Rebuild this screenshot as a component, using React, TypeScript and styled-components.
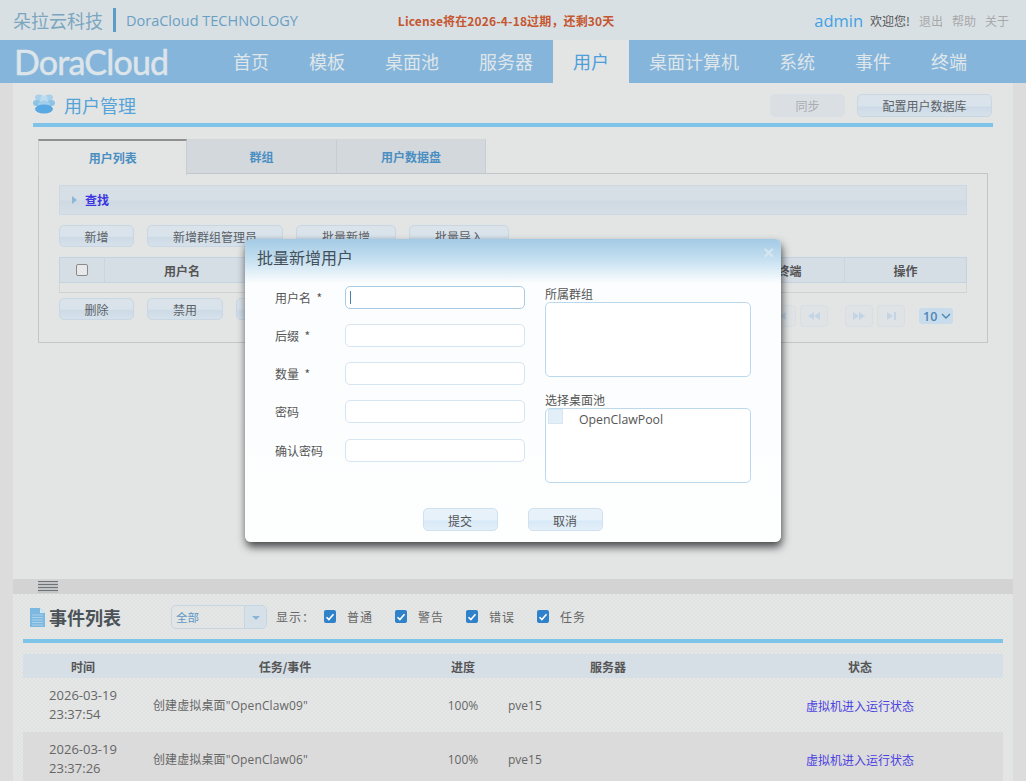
import styled, { createGlobalStyle } from 'styled-components'

const GlobalStyle = createGlobalStyle`
  html, body {
    margin: 0;
    padding: 0;
    background: #dcdcdc;
  }
  body {
    font-family: "Noto Sans CJK SC", "Noto Sans", sans-serif;
    font-size: 12px;
    color: #555;
  }
  * {
    box-sizing: border-box;
  }
`

const navItems = ['首页', '模板', '桌面池', '服务器', '用户', '桌面计算机', '系统', '事件', '终端']
const eventRows = [
  { date: '2026-03-19', time: '23:37:54', name: 'OpenClaw09' },
  { date: '2026-03-19', time: '23:37:26', name: 'OpenClaw06' },
]

const UsersIcon = () => (
  <svg width="22" height="20" viewBox="0 0 22 20">
    <ellipse cx="6" cy="3.500" rx="4" ry="3" fill="#a9d0ea" />
    <ellipse cx="16" cy="3.500" rx="4" ry="3" fill="#a9d0ea" />
    <ellipse cx="11" cy="4.500" rx="3.500" ry="3" fill="#bcdcf0" />
    <ellipse cx="4" cy="9" rx="4" ry="3" fill="#8cc2e6" />
    <ellipse cx="18" cy="9" rx="4" ry="3" fill="#8cc2e6" />
    <ellipse cx="11" cy="9.500" rx="6" ry="3" fill="#a3cfec" />
    <ellipse cx="11" cy="15" rx="9" ry="4.500" fill="#5aa8e2" />
  </svg>
)

const FileIcon = () => (
  <svg width="15" height="20" viewBox="0 0 15 20">
    <path d="M0 1h10l5 5v14H0z" fill="#7db8e0" />
    <path d="M10 1l5 5h-5z" fill="#d4e8f5" />
    <path d="M2 8h11M2 10.500h11M2 13h11M2 15.500h11M2 18h11" stroke="#a9d0ea" strokeWidth="1" />
  </svg>
)

const PagerIcon = ({ first, dir }: { first?: boolean; dir: 'left' | 'right' }) => (
  <svg width="14" height="8" viewBox="0 0 14 8" fill="#c3d5e4">
    {dir === 'left' ? (
      first ? (
        <path d="M2 0h2v8H2zM11 0v8L5 4z" />
      ) : (
        <path d="M7 0v8L1 4zM13 0v8L7 4z" />
      )
    ) : first ? (
      <path d="M1 0v8l6-4zM7 0v8l6-4z" />
    ) : (
      <path d="M3 0v8l6-4zM10 0h2v8h-2z" />
    )}
  </svg>
)

export default function App() {
  return (
    <Page>
      <GlobalStyle />
      <TopBar>
        <Company>朵拉云科技</Company>
        <Divider />
        <CompanyEn>DoraCloud TECHNOLOGY</CompanyEn>
        <License>License将在2026-4-18过期，还剩30天</License>
        <UserBox>
          <AdminName>admin</AdminName>
          <Welcome>欢迎您!</Welcome>
          <TopLink>退出</TopLink>
          <TopLink>帮助</TopLink>
          <TopLink>关于</TopLink>
        </UserBox>
      </TopBar>

      <NavBar>
        <Logo>DoraCloud</Logo>
        <NavList>
          {navItems.map((item) => (
            <NavItem key={item} $active={item === '用户'}>
              {item}
            </NavItem>
          ))}
        </NavList>
      </NavBar>

      <Shell>
        <UserSection>
          <SectionHeader>
            <UsersIcon />
            <SectionTitle>用户管理</SectionTitle>
            <HeaderActions>
              <Button $width={75} $height={23} $disabled>同步</Button>
              <Button $width={135} $height={23}>配置用户数据库</Button>
            </HeaderActions>
          </SectionHeader>

          <Tabs>
            <Tab $active>用户列表</Tab>
            <Tab>群组</Tab>
            <Tab>用户数据盘</Tab>
          </Tabs>

          <TabPanel>
            <SearchBar>
              <SearchArrow />
              查找
            </SearchBar>
            <ButtonRow>
              <Button $width={75}>新增</Button>
              <Button $width={136}>新增群组管理员</Button>
              <Button $width={100}>批量新增</Button>
              <Button $width={100}>批量导入</Button>
            </ButtonRow>
            <UserTable>
              <UserHead>
                <UserHeadCell $width={45}>
                  <PlainCheck />
                </UserHeadCell>
                <UserHeadCell $width={155}>用户名</UserHeadCell>
                <UserHeadCell $grow />
                <UserHeadCell $width={110}>终端</UserHeadCell>
                <UserHeadCell $width={121}>操作</UserHeadCell>
              </UserHead>
              <UserEmptyRow />
            </UserTable>
            <TableFooter>
              <Button $width={75}>删除</Button>
              <Button $width={76}>禁用</Button>
              <Button $width={76} />
              <Pager>
                <PagerGroup>
                  <PagerButton><PagerIcon dir="left" first /></PagerButton>
                  <PagerButton><PagerIcon dir="left" /></PagerButton>
                </PagerGroup>
                <PagerGroup>
                  <PagerButton><PagerIcon dir="right" first /></PagerButton>
                  <PagerButton><PagerIcon dir="right" /></PagerButton>
                </PagerGroup>
                <PageSize>
                  10
                  <svg width="10" height="6" viewBox="0 0 10 6" fill="none" stroke="#4f86b5" strokeWidth="1.400">
                    <path d="M1 1l4 4 4-4" />
                  </svg>
                </PageSize>
              </Pager>
            </TableFooter>
          </TabPanel>
        </UserSection>

        <Splitter>
          <SplitterGrip />
        </Splitter>

        <EventSection>
          <EventHeader>
            <EventTitleBox>
              <FileIcon />
              <EventTitle>事件列表</EventTitle>
            </EventTitleBox>
            <FilterSelect>
              <FilterValue>全部</FilterValue>
              <FilterArrow />
            </FilterSelect>
            <ShowLabel>显示：</ShowLabel>
            {['普通', '警告', '错误', '任务'].map((label) => (
              <CheckItem key={label}>
                <BlueCheck>
                  <svg width="10" height="10" viewBox="0 0 10 10" fill="none" stroke="#fff" strokeWidth="1.600">
                    <path d="M1.500 5.200l2.400 2.400 4.600-5.400" />
                  </svg>
                </BlueCheck>
                <CheckLabel>{label}</CheckLabel>
              </CheckItem>
            ))}
          </EventHeader>
          <EventTable>
            <thead>
              <tr>
                <EventTh $width={120}>时间</EventTh>
                <EventTh $width={284}>任务/事件</EventTh>
                <EventTh $width={72}>进度</EventTh>
                <EventTh $width={218}>服务器</EventTh>
                <EventTh $width={286}>状态</EventTh>
              </tr>
            </thead>
            <tbody>
              {eventRows.map((row) => (
                <EventRow key={row.name}>
                  <DateCell>
                    <DateText>
                      {row.date}
                      <br />
                      {row.time}
                    </DateText>
                  </DateCell>
                  <TaskCell>创建虚拟桌面"{row.name}"</TaskCell>
                  <ProgressCell>100%</ProgressCell>
                  <ServerCell>pve15</ServerCell>
                  <StatusCell>虚拟机进入运行状态</StatusCell>
                </EventRow>
              ))}
            </tbody>
          </EventTable>
        </EventSection>
      </Shell>

      <Modal>
        <ModalTitle>批量新增用户</ModalTitle>
        <CloseMark>×</CloseMark>
        <ModalBody>
          <FieldColumn>
            <FieldRow>
              <FieldLabel>用户名&nbsp;&nbsp;*</FieldLabel>
              <TextInput $focused>
                <Caret />
              </TextInput>
            </FieldRow>
            <FieldRow>
              <FieldLabel>后缀&nbsp;&nbsp;*</FieldLabel>
              <TextInput />
            </FieldRow>
            <FieldRow>
              <FieldLabel>数量&nbsp;&nbsp;*</FieldLabel>
              <TextInput />
            </FieldRow>
            <FieldRow>
              <FieldLabel>密码</FieldLabel>
              <TextInput />
            </FieldRow>
            <FieldRow>
              <FieldLabel>确认密码</FieldLabel>
              <TextInput />
            </FieldRow>
          </FieldColumn>
          <ListColumn>
            <ListLabel>所属群组</ListLabel>
            <ListBox />
            <ListLabel $second>选择桌面池</ListLabel>
            <ListBox>
              <PoolCheck />
              <PoolName>OpenClawPool</PoolName>
            </ListBox>
          </ListColumn>
        </ModalBody>
        <ModalFooter>
          <ModalButton>提交</ModalButton>
          <ModalButton>取消</ModalButton>
        </ModalFooter>
      </Modal>
    </Page>
  )
}

const Page = styled.div`
  position: relative;
  width: 1026px;
  height: 781px;
  overflow: hidden;
`

const TopBar = styled.div`
  display: flex;
  align-items: center;
  height: 40px;
  padding: 0 13px;
  background-color: #d9e0e4;
`

const Company = styled.div`
  font-size: 18px;
  color: #7ba6bf;
`

const Divider = styled.div`
  width: 3px;
  height: 24px;
  margin: 0 10px;
  background-color: #5c9cc5;
`

const CompanyEn = styled.div`
  font-family: "Open Sans", sans-serif;
  font-size: 14.500px;
  color: #6a9fc3;
`

const License = styled.div`
  margin-left: 100px;
  font-size: 12px;
  font-weight: 700;
  letter-spacing: 0.150px;
  color: #c5562f;
`

const UserBox = styled.div`
  display: flex;
  align-items: center;
  margin-left: auto;
  padding-right: 4px;
`

const AdminName = styled.span`
  margin-right: 7px;
  font-family: "Open Sans", sans-serif;
  font-size: 16.500px;
  color: #42a0e4;
`

const Welcome = styled.span`
  font-size: 12px;
  color: #555;
`

const TopLink = styled.span`
  margin-left: 9px;
  font-size: 12px;
  color: #a8a8a8;
`

const NavBar = styled.div`
  display: flex;
  height: 43px;
  background-color: #85b5db;
`

const Logo = styled.div`
  width: 213px;
  padding-left: 14px;
  font-family: "Lato", sans-serif;
  font-size: 34px;
  font-weight: 400;
  line-height: 43px;
  letter-spacing: -0.800px;
  color: #dde5ea;
  -webkit-text-stroke: 0.500px #dde5ea;
`

const NavList = styled.div`
  display: flex;
`

const NavItem = styled.div<{ $active?: boolean }>`
  padding: 0 20px;
  font-size: 18px;
  line-height: 43px;
  color: ${(p) => (p.$active ? '#4d9fdc' : '#dfe6ea')};
  background-color: ${(p) => (p.$active ? '#e3e4e4' : 'transparent')};
`

const Shell = styled.div`
  display: flex;
  flex-direction: column;
  height: 698px;
  margin: 0 13px;
  background-color: #e3e5e4;
`

const UserSection = styled.div`
  flex: 0 0 496px;
  padding: 0 20px;
`

const SectionHeader = styled.div`
  display: flex;
  align-items: center;
  height: 44px;
  padding-top: 3px;
  border-bottom: 4px solid #7ec3e8;

  svg {
    margin-top: -2px;
  }
`

const SectionTitle = styled.div`
  margin-left: 9px;
  font-size: 18px;
  color: #55a3d8;
`

const HeaderActions = styled.div`
  display: flex;
  gap: 12px;
  margin-left: auto;
  margin-right: 1px;
  margin-top: 2px;
`

const Button = styled.div<{ $width: number; $height?: number; $disabled?: boolean }>`
  width: ${(p) => p.$width}px;
  height: ${(p) => p.$height ?? 22}px;
  border: 1px solid ${(p) => (p.$disabled ? '#d8dfe6' : '#c9d7e4')};
  border-radius: 5px;
  font-size: 12px;
  line-height: 21px;
  text-align: center;
  color: ${(p) => (p.$disabled ? '#a9adb1' : '#5c6166')};
  background: ${(p) =>
    p.$disabled
      ? '#dadfe4'
      : 'linear-gradient(#dbe3ea 0, #d9e3eb 50%, #cddbe7 58%, #d6e1ea 100%)'};
`

const Tabs = styled.div`
  display: flex;
  margin: 12px 0 0 5px;
`

const Tab = styled.div<{ $active?: boolean }>`
  position: relative;
  z-index: ${(p) => (p.$active ? 1 : 0)};
  width: 149.400px;
  height: ${(p) => (p.$active ? '36px' : '35px')};
  border: 1px solid #c9cdd1;
  border-left-width: ${(p) => (p.$active ? '1px' : '0')};
  border-top: ${(p) => (p.$active ? '2px solid #909090' : '1px solid #d3d7db')};
  border-bottom: ${(p) => (p.$active ? '0' : '1px solid #c3c7cb')};
  font-size: 12px;
  font-weight: 700;
  line-height: 34px;
  text-align: center;
  color: #4a8ec2;
  background-color: ${(p) => (p.$active ? '#e3e5e4' : '#d3d8dd')};
`

const TabPanel = styled.div`
  width: 950px;
  height: 170px;
  margin: -2px 0 0 5px;
  padding: 11px 20px 0;
  border: 1px solid #c3c6c8;
`

const SearchBar = styled.div`
  display: flex;
  align-items: center;
  height: 30px;
  padding: 0 0 1px 12px;
  border: 1px solid #cdd8e2;
  font-size: 12px;
  font-weight: 700;
  color: #3b35e0;
  background: linear-gradient(#d7dfe6 0, #d7dfe6 48%, #ced9e3 55%, #d6dfe6 100%);
`

const SearchArrow = styled.span`
  width: 0;
  height: 0;
  margin-right: 8px;
  border-top: 4px solid transparent;
  border-bottom: 4px solid transparent;
  border-left: 5px solid #8db7d8;
`

const ButtonRow = styled.div`
  display: flex;
  gap: 13px;
  margin-top: 10px;
`

const UserTable = styled.div`
  margin-top: 10px;
  border-bottom: 1px solid #cfd2d4;
`

const UserHead = styled.div`
  display: flex;
  height: 26px;
  border: 1px solid #c5d3e0;
  background-color: #d5dde5;
`

const UserHeadCell = styled.div<{ $width?: number; $grow?: boolean }>`
  display: flex;
  align-items: center;
  justify-content: center;
  flex: ${(p) => (p.$grow ? '1' : `0 0 ${p.$width}px`)};
  border-right: 1px solid #c9d6e2;
  font-size: 12px;
  font-weight: 700;
  color: #555;

  &:last-child {
    border-right: 0;
  }
`

const PlainCheck = styled.span`
  width: 12px;
  height: 12px;
  border: 1px solid #8a8a8a;
  border-radius: 2px;
  background-color: #e6e8e9;
`

const UserEmptyRow = styled.div`
  height: 9px;
  border-left: 1px solid #d3d6d8;
  border-right: 1px solid #d3d6d8;
`

const TableFooter = styled.div`
  display: flex;
  gap: 13px;
  margin-top: 5px;
`

const Pager = styled.div`
  display: flex;
  align-items: center;
  gap: 17px;
  height: 22px;
  margin: 7px 14px 0 auto;
`

const PagerGroup = styled.div`
  display: flex;
  gap: 4px;
`

const PagerButton = styled.div`
  display: flex;
  align-items: center;
  justify-content: center;
  width: 28px;
  height: 22px;
  border: 1px solid #d9dee3;
  border-radius: 4px;
  background-color: #dfe3e6;
`

const PageSize = styled.div`
  display: flex;
  align-items: center;
  gap: 4px;
  width: 34px;
  height: 16px;
  margin-left: -3px;
  padding-left: 4px;
  border-radius: 3px;
  font-family: "Open Sans", sans-serif;
  font-size: 12.500px;
  font-weight: 600;
  color: #4f86b5;
  background-color: #c9dcec;
`

const Splitter = styled.div`
  flex: 0 0 15px;
  padding-left: 25px;
  background-color: #d3d3d3;
`

const SplitterGrip = styled.div`
  width: 20px;
  height: 15px;
  background: repeating-linear-gradient(#6f7478 0, #6f7478 1px, #c2c4c5 1px, #c2c4c5 3px);
  background-size: 20px 12px;
  background-repeat: no-repeat;
  background-position: 0 2px;
`

const EventSection = styled.div`
  flex: 1;
  padding: 0 10px;
  background-color: #e3e5e4;
  background-image: repeating-conic-gradient(#e1e3e2 0 25%, #e5e7e6 0 50%);
  background-size: 4px 4px;
`

const EventHeader = styled.div`
  display: flex;
  align-items: center;
  height: 49px;
  border-bottom: 4px solid #7ec3e8;
`

const EventTitleBox = styled.div`
  display: flex;
  align-items: center;
  gap: 4px;
  width: 148px;
  padding-left: 7px;
`

const EventTitle = styled.div`
  font-size: 18px;
  font-weight: 700;
  color: #4b5258;
`

const FilterSelect = styled.div`
  display: flex;
  width: 96px;
  height: 24px;
  border: 1px solid #c6d5e2;
  border-radius: 5px;
  overflow: hidden;
`

const FilterValue = styled.div`
  flex: 1;
  padding-left: 4px;
  font-size: 11.500px;
  line-height: 22px;
  color: #5f97c4;
`

const FilterArrow = styled.div`
  position: relative;
  width: 22px;
  border-left: 1px solid #c6d5e2;
  background-color: #d6e0e9;

  &::after {
    content: '';
    position: absolute;
    left: 7px;
    top: 10px;
    border-left: 4px solid transparent;
    border-right: 4px solid transparent;
    border-top: 4px solid #8cb4d4;
  }
`

const ShowLabel = styled.div`
  width: 48px;
  margin-left: 9px;
  font-size: 12px;
  letter-spacing: 1px;
  color: #666;
`

const CheckItem = styled.div`
  display: flex;
  align-items: center;
  gap: 11px;
  width: 71px;
`

const BlueCheck = styled.span`
  display: flex;
  align-items: center;
  justify-content: center;
  width: 12px;
  height: 13px;
  border-radius: 2px;
  background-color: #2f81c9;
`

const CheckLabel = styled.span`
  font-size: 12px;
  letter-spacing: 1px;
  color: #666;
`

const EventTable = styled.table`
  width: 980px;
  margin-top: 11px;
  border-collapse: collapse;
  table-layout: fixed;
`

const EventTh = styled.th<{ $width: number }>`
  width: ${(p) => p.$width}px;
  height: 24px;
  padding: 0;
  font-size: 12px;
  font-weight: 700;
  color: #555;
  background-color: #d6dee6;
`

const EventRow = styled.tr`
  height: 54px;
  font-size: 12px;
  color: #666;

  &:nth-child(even) {
    background-color: #dbdbdb;
  }
`

const DateCell = styled.td`
  padding: 0;
  text-align: center;
`

const DateText = styled.div`
  display: inline-block;
  font-family: "Open Sans", "Noto Sans CJK SC", sans-serif;
  font-size: 13px;
  line-height: 19px;
  text-align: left;
`

const TaskCell = styled.td`
  padding: 0 0 0 10px;
  font-family: "Open Sans", "Noto Sans CJK SC", sans-serif;
  letter-spacing: 0.120px;
`

const ProgressCell = styled.td`
  padding: 0;
  font-family: "Open Sans", sans-serif;
  text-align: center;
`

const ServerCell = styled.td`
  padding: 0 0 0 9px;
  font-family: "Open Sans", sans-serif;
`

const StatusCell = styled.td`
  padding: 0;
  text-align: center;
  color: #4b42e0;
`

const Modal = styled.div`
  position: absolute;
  left: 245px;
  top: 239px;
  width: 536px;
  height: 303px;
  border-radius: 6px;
  background: linear-gradient(#a3cae5 0, #c4dff0 20px, #fbfdfe 44px, #fdfefe 100%);
  box-shadow: 1px 5px 9px rgba(30, 32, 35, 0.8);
`

const ModalTitle = styled.div`
  padding: 7px 0 0 12px;
  font-size: 16px;
  line-height: 22px;
  color: #445059;
`

const CloseMark = styled.div`
  position: absolute;
  right: 7px;
  top: 3px;
  font-family: "Liberation Sans", sans-serif;
  font-size: 19px;
  font-weight: 700;
  color: #d6e6f1;
`

const ModalBody = styled.div`
  display: flex;
  margin-top: 18px;
`

const FieldColumn = styled.div`
  display: flex;
  flex-direction: column;
  gap: 15.150px;
  width: 300px;
  padding-left: 30px;
`

const FieldRow = styled.div`
  display: flex;
  align-items: center;
`

const FieldLabel = styled.div`
  width: 70px;
  font-size: 12px;
  color: #555;
`

const TextInput = styled.div<{ $focused?: boolean }>`
  display: flex;
  align-items: center;
  width: 180px;
  height: 23px;
  padding-left: 4px;
  border: 1px solid ${(p) => (p.$focused ? '#a9cbe6' : '#d6e5f2')};
  border-radius: 5px;
  background-color: #fff;
`

const Caret = styled.span`
  width: 1px;
  height: 13px;
  background-color: #4c7ea8;
`

const ListColumn = styled.div`
  width: 206px;
`

const ListLabel = styled.div<{ $second?: boolean }>`
  height: 16px;
  margin-top: ${(p) => (p.$second ? '15px' : '0')};
  font-size: 12px;
  line-height: 16px;
  color: #555;
`

const ListBox = styled.div`
  display: flex;
  height: 75px;
  padding-left: 2px;
  border: 1px solid #bcd8ed;
  border-radius: 5px;
  background-color: #fff;
`

const PoolCheck = styled.span`
  width: 15px;
  height: 15px;
  border: 1px solid #d6e6f3;
  background-color: #e2eef8;
`

const PoolName = styled.span`
  margin-left: 16px;
  font-family: "Open Sans", sans-serif;
  font-size: 12.300px;
  line-height: 22px;
  color: #555;
`

const ModalFooter = styled.div`
  display: flex;
  justify-content: center;
  gap: 30px;
  margin-top: 25px;
  padding-right: 1px;
`

const ModalButton = styled.div`
  width: 75px;
  height: 23px;
  border: 1px solid #cfe0ef;
  border-radius: 5px;
  font-size: 12px;
  line-height: 23px;
  text-align: center;
  color: #555;
  background: linear-gradient(#e8f2fa 0, #e6f1fa 50%, #d8e9f7 58%, #e4f0f9 100%);
`
